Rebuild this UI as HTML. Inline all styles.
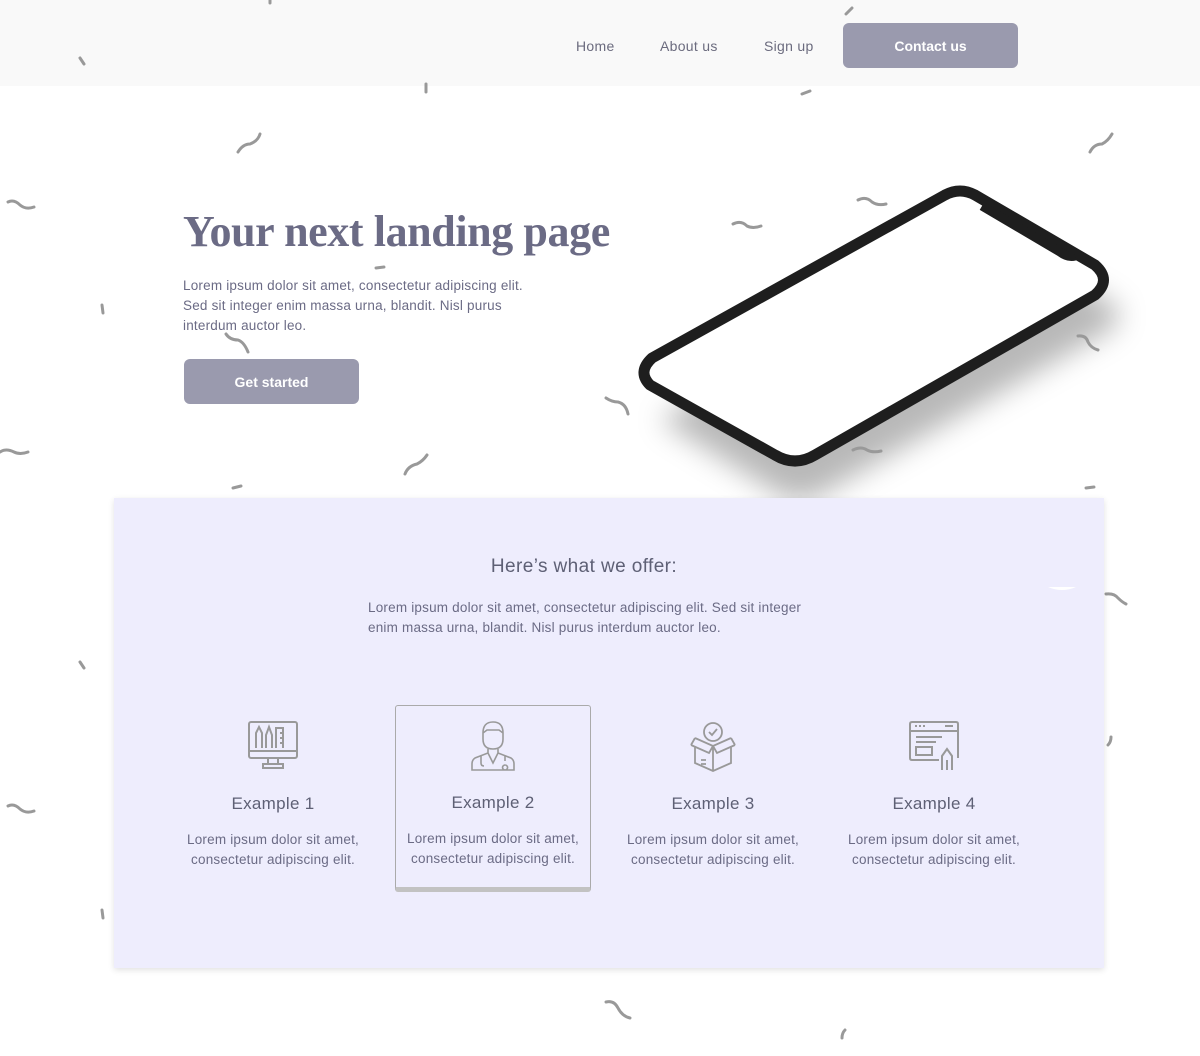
<!DOCTYPE html>
<html><head><meta charset="utf-8"><style>
*{margin:0;padding:0;box-sizing:border-box}
body{width:1200px;height:1056px;background:#fff;font-family:"Liberation Sans",sans-serif;position:relative;overflow:hidden;color:#6b6b85}
.nav{position:absolute;left:0;top:0;width:1200px;height:86px;background:#f9f9f9}
.nav a{position:absolute;top:38px;font-size:14px;color:#6b6b7e;text-decoration:none;letter-spacing:.3px}
.btn{position:absolute;background:#9a9aae;color:#fff;font-weight:bold;font-size:14px;border-radius:6px;display:flex;align-items:center;justify-content:center}
h1{position:absolute;left:183px;top:206px;font-family:"Liberation Serif",serif;font-weight:bold;font-size:44px;color:#6b6b85;letter-spacing:-0.4px;white-space:nowrap}
.p{position:absolute;font-size:13.5px;line-height:20px;color:#6b6b85;letter-spacing:.2px;white-space:nowrap}
.sec{position:absolute;left:114px;top:498px;width:990px;height:470px;background:#eeedfd;box-shadow:0 2px 6px rgba(0,0,0,.12)}
.card{position:absolute;width:196px;text-align:center}
.card h3{font-weight:normal;font-size:17px;color:#5e6075;margin-bottom:16px;letter-spacing:.3px}
.card p{font-size:13.5px;line-height:20px;color:#6b6b85;letter-spacing:.2px}
.sq{position:absolute;stroke:#999;stroke-width:3;fill:none;stroke-linecap:round}
</style></head><body>
<div class="nav">
<a style="left:576px">Home</a><a style="left:660px">About us</a><a style="left:764px">Sign up</a>
<div class="btn" style="left:843px;top:23px;width:175px;height:45px">Contact us</div>
</div>
<h1>Your next landing page</h1>
<div class="p" style="left:183px;top:276px">Lorem ipsum dolor sit amet, consectetur adipiscing elit.<br>Sed sit integer enim massa urna, blandit. Nisl purus<br>interdum auctor leo.</div>
<div class="btn" style="left:184px;top:359px;width:175px;height:45px">Get started</div>

<svg style="position:absolute;left:0;top:0" width="1200" height="1056">
<defs><filter id="sh" x="-30%" y="-30%" width="160%" height="160%"><feGaussianBlur stdDeviation="14"/></filter></defs>
<path d="M975 225 L1115 305 Q1125 318 1110 330 L820 495 Q800 505 780 495 L660 420 Z" fill="rgba(0,0,0,.28)" filter="url(#sh)"/>
<path d="M945 195 Q960 187 975 195 L1095 265 Q1112 280 1095 295 L815 455 Q795 467 775 455 L650 385 Q637 372 652 358 Z" fill="#fff" stroke="#1e1e1e" stroke-width="11" stroke-linejoin="round"/>
<path d="M982 206 L1060 252 Q1068 258 1075 256" stroke="#1e1e1e" stroke-width="9" fill="none"/>
<g class="sq">
<path class="sq" d="M238 152 q5 -8 12 -8 q8 -3 10 -10"/>
<path class="sq" d="M8 202 q6 -3 12 3 q6 5 14 2"/>
<path class="sq" d="M733 224 q8 -4 14 2 q6 3 14 0"/>
<path class="sq" d="M858 200 q8 -4 14 2 q6 4 14 2"/>
<path class="sq" d="M1090 152 q4 -8 12 -8 q6 -3 10 -10"/>
<path class="sq" d="M1078 336 q8 -1 10 6 q3 6 10 8"/>
<path class="sq" d="M606 398 q6 4 12 4 q8 2 10 12"/>
<path class="sq" d="M405 474 q3 -8 12 -10 q6 -3 10 -9"/>
<path class="sq" d="M853 450 q8 -4 14 0 q6 3 14 1"/>
<path class="sq" d="M0 452 q6 -4 14 0 q6 3 14 0"/>
<path class="sq" d="M8 806 q6 -3 12 3 q6 5 14 2"/>
<path class="sq" d="M1106 594 q8 -1 12 4 q4 4 8 6"/>
<path class="sq" d="M606 1002 q8 -2 12 6 q4 8 12 10"/>
<path class="sq" d="M226 334 q4 6 12 6 q6 2 10 12"/>
<path class="sq" d="M80 58 l4 6 M102 305 l1 8 M426 84 l0 8 M376 268 l8 -1 M233 488 l8 -2 M802 94 l8 -3 M1086 488 l8 -1 M80 662 l4 6 M102 910 l1 8 M1108 745 q3 -3 3 -8 M845 1030 q-3 3 -3 8 M852 8 q-3 3 -6 6 M270 0 l0 3"/>
</g>
</svg>

<div class="sec">
<div style="position:absolute;left:0;top:58px;width:940px;text-align:center;font-size:19px;color:#5e6075;letter-spacing:.4px">Here’s what we offer:</div>
<div class="p" style="left:254px;top:100px">Lorem ipsum dolor sit amet, consectetur adipiscing elit. Sed sit integer<br>enim massa urna, blandit. Nisl purus interdum auctor leo.</div>
<div class="card" style="left:61px;top:222px">
<svg width="50" height="52" viewBox="0 0 50 52" style="display:block;margin:0 auto 22px" fill="none" stroke="#999" stroke-width="2"><rect x="1" y="2" width="48" height="36" rx="2"/><path d="M1 31h48M20 38v6M30 38v6M15 48h20v-4H15z M8 28V13l3-6 3 6v15 M18 28V15l3-8 3 8v13 M28 28V8h7v20 M35 13h-3M35 18h-3M35 23h-3"/></svg>
<h3>Example 1</h3><p>Lorem ipsum dolor sit amet, consectetur adipiscing elit.</p></div>
<div class="card" style="left:281px;top:207px;height:187px;border:1px solid #aaa;border-radius:3px;border-bottom:5px solid #c2c2c2;padding-top:15px">
<svg width="44" height="50" viewBox="0 0 44 50" style="display:block;margin:0 auto 22px" fill="none" stroke="#999" stroke-width="1.6"><path d="M12 12q0-11 10-11t10 11v6q0 10-10 10t-10-10z M12 12l4-3h12l4 3 M17 28v4l-13 5q-3 2-3 6v6h42v-6q0-4-3-6l-13-5v-4 M17 32l5 10 5-10 M10 35v7q0 3 3 3 M34 35v5 M34 44a2.5 2.5 0 1 0 .1 0"/></svg>
<h3>Example 2</h3><p>Lorem ipsum dolor sit amet, consectetur adipiscing elit.</p></div>
<div class="card" style="left:501px;top:222px">
<svg width="50" height="52" viewBox="0 0 50 52" style="display:block;margin:0 auto 22px" fill="none" stroke="#999" stroke-width="1.8"><circle cx="25" cy="12" r="9"/><path d="M21 12l3 3 5-6 M7 18l18 8 18-8 M3 25l4-7 M47 25l-4-7 M7 26v17l18 8 18-8V26 M25 26v25 M3 25l18 8 4-7 M47 25l-18 8-4-7 M13 40h5M13 44h5"/></svg>
<h3>Example 3</h3><p>Lorem ipsum dolor sit amet, consectetur adipiscing elit.</p></div>
<div class="card" style="left:722px;top:222px">
<svg width="50" height="52" viewBox="0 0 50 52" style="display:block;margin:0 auto 22px" fill="none" stroke="#999" stroke-width="2"><path d="M30 40H3q-2 0-2-2V4q0-2 2-2h44q2 0 2 2v34 M1 11h48 M6 6h2M10 6h2M14 6h2M36 6h8 M7 17h26M7 22h20 M7 27h16v8H7z M33 50V36l5-7 5 7v14 M38 50V40"/></svg>
<h3>Example 4</h3><p>Lorem ipsum dolor sit amet, consectetur adipiscing elit.</p></div>
</div>
<svg style="position:absolute;left:1048px;top:585px" width="28" height="8"><path d="M0 2q14 6 28 0z" fill="#fff"/></svg>
</body></html>
